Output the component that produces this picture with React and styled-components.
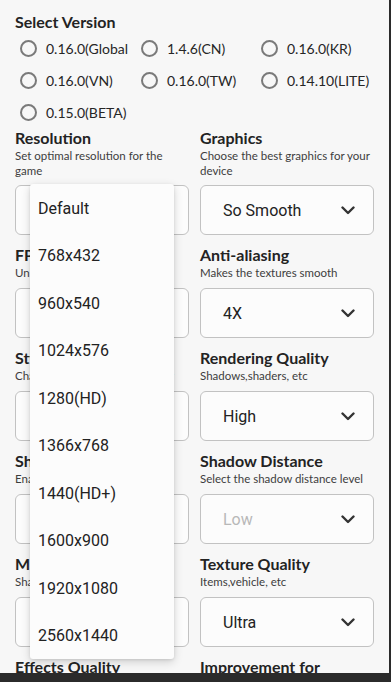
import React from 'react'
import styled, { createGlobalStyle } from 'styled-components'

const Global = createGlobalStyle`
  html, body {
    margin: 0;
    background: #2b2b2b;
  }
`

const Page = styled.div`
  position: relative;
  width: 389px;
  height: 673px;
  overflow: hidden;
  background: #f7f7f7;
  box-sizing: border-box;
  padding: 12px 15px 0;
  font-family: Lato, "Open Sans", sans-serif;
  color: #222;
`

const Heading = styled.div`
  font-size: 16px;
  line-height: 20px;
  font-weight: 700;
  color: #232323;
  white-space: nowrap;
`

const RadioGrid = styled.div`
  display: grid;
  grid-template-columns: 121px 120px 1fr;
  grid-auto-rows: 32px;
  margin-left: 5px;
`

const RadioItem = styled.label`
  display: flex;
  align-items: center;
  gap: 9px;
  font-size: 14px;
  color: #262626;
  white-space: nowrap;
`

const Circle = styled.span`
  width: 17px;
  height: 17px;
  box-sizing: border-box;
  border: 2px solid #7a7a7a;
  border-radius: 50%;
  flex: none;
`

const Settings = styled.div`
  display: grid;
  grid-template-columns: 174px 174px;
  column-gap: 11px;
  row-gap: 10px;
`

const Cell = styled.div`
  display: flex;
  flex-direction: column;
`

const Desc = styled.div`
  font-size: 11.5px;
  line-height: 15px;
  color: #3d3d3d;
  margin-bottom: ${p => (p.$lines === 2 ? 7 : 8)}px;
`

const SelectBox = styled.div`
  height: 50px;
  box-sizing: border-box;
  border: 1px solid #c2c2c2;
  border-radius: 6px;
  background: #fcfcfc;
  display: flex;
  align-items: center;
  justify-content: space-between;
  padding: 0 18px 0 22px;
  font-family: Roboto, "Liberation Sans", sans-serif;
  font-size: 16px;
  color: ${p => (p.$muted ? '#b8b8b8' : '#222')};
`

const Menu = styled.div`
  position: absolute;
  top: 184px;
  left: 30px;
  width: 144px;
  background: #fcfcfc;
  border-radius: 3px;
  box-shadow: 0 3px 10px rgba(0, 0, 0, 0.16), 0 1px 3px rgba(0, 0, 0, 0.1);
`

const MenuItem = styled.div`
  height: 47.5px;
  display: flex;
  align-items: center;
  padding: 1px 0 0 8px;
  box-sizing: border-box;
  font-family: Roboto, "Liberation Sans", sans-serif;
  font-size: 16px;
  color: #222;
`

const Chevron = () => (
  <svg width="14" height="9" viewBox="0 0 14 9" fill="none">
    <path d="M1.5 1.5 L7 7 L12.5 1.5" stroke="#333" strokeWidth="2.4" strokeLinecap="round" strokeLinejoin="round" />
  </svg>
)

const versions = ['0.16.0(Global', '1.4.6(CN)', '0.16.0(KR)', '0.16.0(VN)', '0.16.0(TW)', '0.14.10(LITE)', '0.15.0(BETA)']

const settings = [
  { title: 'Resolution', desc: 'Set optimal resolution for the game', value: 'Default', lines: 2 },
  { title: 'Graphics', desc: 'Choose the best graphics for your device', value: 'So Smooth', lines: 2 },
  { title: 'FPS', desc: 'Unlock max frame rate', value: '60 FPS' },
  { title: 'Anti-aliasing', desc: 'Makes the textures smooth', value: '4X' },
  { title: 'Style', desc: 'Change the colour of the player', value: 'Classic' },
  { title: 'Rendering Quality', desc: 'Shadows,shaders, etc', value: 'High' },
  { title: 'Shadow', desc: 'Enable or disable shadows', value: 'Enable' },
  { title: 'Shadow Distance', desc: 'Select the shadow distance level', value: 'Low', muted: true },
  { title: 'MSAA', desc: 'Sharpen the edges', value: 'Disable' },
  { title: 'Texture Quality', desc: 'Items,vehicle, etc', value: 'Ultra' },
  { title: 'Effects Quality', desc: 'Particles, explosions', value: 'Low' },
  { title: 'Improvement for', desc: 'Effects on low end devices', value: 'Disable' },
]

const resolutions = ['Default', '768x432', '960x540', '1024x576', '1280(HD)', '1366x768', '1440(HD+)', '1600x900', '1920x1080', '2560x1440']

export default function App() {
  return (
    <Page>
      <Global />
      <Heading>Select Version</Heading>
      <RadioGrid>
        {versions.map(v => (
          <RadioItem key={v}>
            <Circle />
            {v}
          </RadioItem>
        ))}
      </RadioGrid>
      <Settings>
        {settings.map(s => (
          <Cell key={s.title}>
            <Heading>{s.title}</Heading>
            <Desc $lines={s.lines}>{s.desc}</Desc>
            <SelectBox $muted={s.muted}>
              {s.value}
              <Chevron />
            </SelectBox>
          </Cell>
        ))}
      </Settings>
      <Menu>
        {resolutions.map(r => <MenuItem key={r}>{r}</MenuItem>)}
      </Menu>
    </Page>
  )
}
